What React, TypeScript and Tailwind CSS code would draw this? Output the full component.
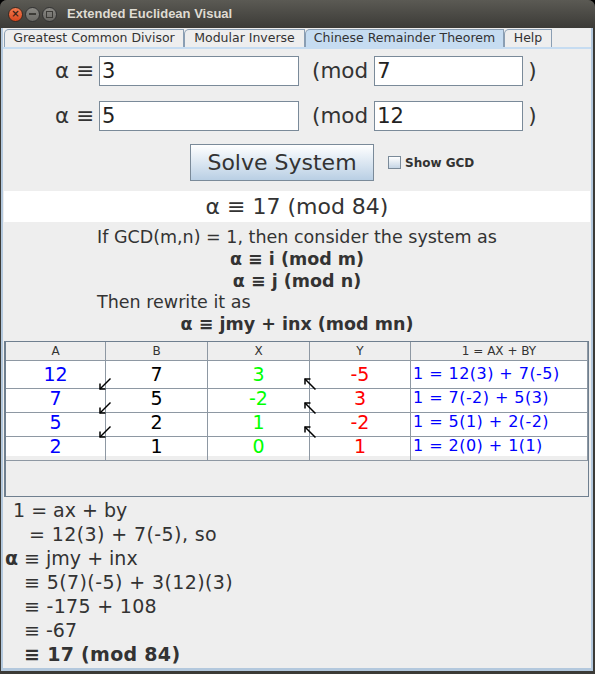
import React from 'react';

const font = { fontFamily: '"DejaVu Sans", "Noto Sans", sans-serif' };

function Arrow({ dir }: { dir: 'dl' | 'ul' }) {
  // small line arrows drawn between table columns
  return dir === 'dl' ? (
    <svg width="14" height="14" viewBox="0 0 14 14">
      <path d="M12.5 1.5 L2 12" stroke="#000" strokeWidth="1.5" fill="none" />
      <path d="M2 6.5 L2 12 L7.5 12" stroke="#000" strokeWidth="1.5" fill="none" />
    </svg>
  ) : (
    <svg width="14" height="14" viewBox="0 0 14 14">
      <path d="M2 2 L12.5 12.5" stroke="#000" strokeWidth="1.5" fill="none" />
      <path d="M2 7.5 L2 2 L7.5 2" stroke="#000" strokeWidth="1.5" fill="none" />
    </svg>
  );
}

const rows = [
  { a: '12', b: '7', x: '3', y: '-5', eq: '1 = 12(3) + 7(-5)' },
  { a: '7', b: '5', x: '-2', y: '3', eq: '1 = 7(-2) + 5(3)' },
  { a: '5', b: '2', x: '1', y: '-2', eq: '1 = 5(1) + 2(-2)' },
  { a: '2', b: '1', x: '0', y: '1', eq: '1 = 2(0) + 1(1)' },
];

const tabs = [
  { t: 'Greatest Common Divisor', w: 'w-[180px]' },
  { t: 'Modular Inverse', w: 'w-[121px]' },
  { t: 'Chinese Remainder Theorem', w: 'w-[199px]' },
  { t: 'Help', w: 'w-[48px]' },
];

function InputRow({ v, m }: { v: string; m: string }) {
  return (
    <div className="flex items-center h-[30px] pl-[52px] text-[21.5px] leading-none text-[#333]">
      <span className="mr-[5px]">α ≡</span>
      <div className="w-[200px] h-[30px] bg-white border border-[#7a8a99] flex items-center px-[2px] text-[21px] text-[#222]">{v}</div>
      <span className="ml-[13px] mr-[6px]">(mod</span>
      <div className="w-[149px] h-[30px] bg-white border border-[#7a8a99] flex items-center px-[2px] text-[21px] text-[#222]">{m}</div>
      <span className="ml-[5px]">)</span>
    </div>
  );
}

export default function App() {
  return (
    <div className="w-[595px] h-[674px] bg-black" style={font}>
      <div className="h-full flex flex-col rounded-t-[7px] overflow-hidden bg-[#3c3b37]">
        {/* Title bar */}
        <div className="h-[28px] shrink-0 flex items-center pl-[8px] bg-gradient-to-b from-[#5b5a54] to-[#3c3b37]">
          <div className="w-[15px] h-[15px] rounded-full bg-gradient-to-b from-[#f27a4e] to-[#d9461c] border border-[#3a2a22] flex items-center justify-center text-[#3b2318] text-[10px] leading-none font-bold">
            ×
          </div>
          <div className="ml-[2px] w-[15px] h-[15px] rounded-full bg-gradient-to-b from-[#8a8984] to-[#6a6965] border border-[#333] flex items-center justify-center">
            <div className="w-[7px] h-[2px] bg-[#3c3b37]" />
          </div>
          <div className="ml-[2px] w-[15px] h-[15px] rounded-full bg-gradient-to-b from-[#8a8984] to-[#6a6965] border border-[#333] flex items-center justify-center">
            <div className="w-[7px] h-[7px] border-[1.5px] border-[#3c3b37]" />
          </div>
          <span
            className="ml-[10px] text-[13px] font-bold text-[#dfdbd2]"
            style={{ fontFamily: '"Liberation Sans", "DejaVu Sans", sans-serif' }}
          >
            Extended Euclidean Visual
          </span>
        </div>

        {/* Window body */}
        <div className="flex-1 flex flex-col bg-[#eeeeee] ml-[1px] mr-[2px] mb-[3px] border-l-[2px] border-r-[2px] border-b-[3px] border-[#b3c8dd]">
          {/* Tabs */}
          <div className="h-[19px] flex items-end pl-[1px] pt-[1px]">
            {tabs.map(({ t, w }) => (
              <div
                key={t}
                className={`${w} h-[18px] flex items-center justify-center text-[12.5px] text-[#333] border-t border-l border-r border-[#8a9eb3] rounded-tl-[5px] ${
                  t === 'Chinese Remainder Theorem' ? 'bg-[#c6dcf1]' : 'bg-[#eeeeee]'
                }`}
              >
                {t}
              </div>
            ))}
          </div>
          <div className="flex-1 flex flex-col border-t-[2px] border-[#c6dcf1]">
            {/* Inputs */}
            <div className="flex flex-col gap-[15px] pt-[7px]">
              <InputRow v="3" m="7" />
              <InputRow v="5" m="12" />
            </div>

            {/* Solve button */}
            <div className="flex items-center pl-[187px] pt-[13px]">
              <button className="w-[184px] h-[37px] bg-gradient-to-b from-[#ffffff] to-[#b9cfe4] border border-[#7a8a99] text-[22px] text-[#333]">
                Solve System
              </button>
              <div className="ml-[14px] w-[13px] h-[13px] border border-[#7a8a99] bg-gradient-to-b from-[#ffffff] to-[#c5d5e5]" />
              <span className="ml-[4px] text-[12px] font-bold text-[#333]">Show GCD</span>
            </div>

            {/* Result */}
            <div className="mt-[10px] mx-[1px] h-[31px] bg-white flex items-center justify-center text-[22px] text-[#333]">
              α ≡ 17 (mod 84)
            </div>

            {/* Explanation */}
            <div className="flex justify-center pt-[5px] text-[17.5px] leading-[21.75px] text-[#333]">
              <div className="flex flex-col">
                <span>If GCD(m,n) = 1, then consider the system as</span>
                <span className="font-bold text-center">α ≡ i (mod m)</span>
                <span className="font-bold text-center">α ≡ j (mod n)</span>
                <span>Then rewrite it as</span>
                <span className="font-bold text-center">α ≡ jmy + inx (mod mn)</span>
              </div>
            </div>

            {/* Table */}
            <div className="relative mt-[5px] ml-[1px] w-[585px] h-[156px] border border-[#6f7f8f] border-l-[2px] bg-[#eeeeee]">
              <div className="grid grid-cols-[100px_102px_102px_101px_177px] h-[18px] text-[12px] text-[#333]">
                {['A', 'B', 'X', 'Y', '1 = AX + BY'].map((h) => (
                  <div key={h} className="border-r border-b border-[#8e98a3] flex items-center justify-center">
                    {h}
                  </div>
                ))}
              </div>
              {rows.map((r, i) => (
                <div key={i} className="grid grid-cols-[100px_102px_102px_101px_177px] h-[24px] bg-white">
                  <div className="border-r border-b border-[#8e98a3] flex items-center justify-center text-[19px] text-[#0000ff]">{r.a}</div>
                  <div className="border-r border-b border-[#8e98a3] flex items-center justify-center text-[19px] text-black">{r.b}</div>
                  <div className="border-r border-b border-[#8e98a3] flex items-center justify-center text-[19px] text-[#00ff00]">{r.x}</div>
                  <div className="border-r border-b border-[#8e98a3] flex items-center justify-center text-[19px] text-[#ff0000]">{r.y}</div>
                  <div className="border-r border-b border-[#8e98a3] flex items-center pl-[2px] text-[16px] text-[#0000ff] tracking-[0.45px]">{r.eq}</div>
                </div>
              ))}
              {[0, 1, 2].map((i) => (
                <React.Fragment key={i}>
                  <div className="absolute left-[92px]" style={{ top: 35 + i * 24 }}>
                    <Arrow dir="dl" />
                  </div>
                  <div className="absolute left-[297px]" style={{ top: 35 + i * 24 }}>
                    <Arrow dir="ul" />
                  </div>
                </React.Fragment>
              ))}
            </div>

            {/* Work */}
            <div className="flex flex-col pt-[1px] text-[19px] leading-[24px] text-[#333]">
              <span className="pl-[10px]">1 = ax + by</span>
              <span className="pl-[26px] tracking-[0.4px]">= 12(3) + 7(-5), so</span>
              <span className="pl-[2px]"><b>α</b> ≡ jmy + inx</span>
              <span className="pl-[21px] tracking-[0.4px]">≡ 5(7)(-5) + 3(12)(3)</span>
              <span className="pl-[21px] tracking-[0.3px]">≡ -175 + 108</span>
              <span className="pl-[21px]">≡ -67</span>
              <span className="pl-[21px] font-bold tracking-[0.3px]">≡ 17 (mod 84)</span>
            </div>
          </div>
        </div>
      </div>
    </div>
  );
}
